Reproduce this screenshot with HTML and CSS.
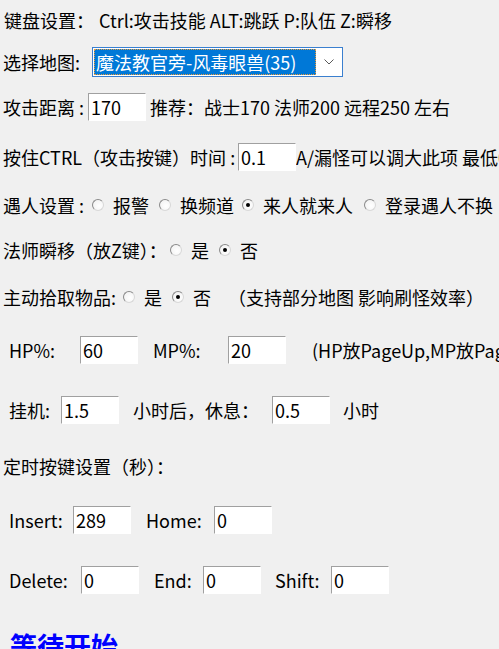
FILE: index.html
```html
<!DOCTYPE html>
<html lang="zh-CN">
<head>
<meta charset="utf-8">
<title>设置</title>
<link rel="stylesheet" href="styles.css">
</head>
<body>
<div class="window">
  <div class="row r1 pl4">
    <span class="lbl w-keys">键盘设置：</span><span>Ctrl:攻击技能 ALT:跳跃 P:队伍 Z:瞬移</span>
  </div>

  <div class="row r2 pl3">
    <span class="lbl w-map">选择地图:</span>
    <div class="combo">
      <span class="combo-value">魔法教官旁-风毒眼兽(35)</span>
      <span class="combo-arrow">
        <svg width="10" height="6" viewBox="0 0 10 6"><path d="M0.5 0.5 L5 5 L9.5 0.5" fill="none" stroke="#5a5a5a" stroke-width="1"/></svg>
      </span>
    </div>
  </div>

  <div class="row r3 pl3">
    <span class="lbl w-dist">攻击距离 :</span>
    <input class="field" type="text" value="170">
    <span class="after-dist">推荐：战士170 法师200 远程250 左右</span>
  </div>

  <div class="row r4 pl3">
    <span class="lbl w-ctrl">按住CTRL（攻击按键）时间 :</span>
    <input class="field field-top" type="text" value="0.1">
    <span class="under-note">卡A/漏怪可以调大此项 最低0.1</span>
  </div>

  <div class="row r5 pl3">
    <span class="lbl w-meet">遇人设置 :</span>
    <span class="opt o-alarm"><span class="radio"></span>报警</span>
    <span class="opt o-chan"><span class="radio"></span>换频道</span>
    <span class="opt o-come"><span class="radio on"></span>来人就来人</span>
    <span class="opt"><span class="radio"></span>登录遇人不换</span>
  </div>

  <div class="row r6 pl3">
    <span class="lbl w-mage">法师瞬移（放Z键）：</span>
    <span class="opt o-yes"><span class="radio"></span>是</span>
    <span class="opt"><span class="radio on"></span>否</span>
  </div>

  <div class="row r7 pl3">
    <span class="lbl w-pick">主动拾取物品:</span>
    <span class="opt o-yes"><span class="radio"></span>是</span>
    <span class="opt o-no"><span class="radio on"></span>否</span>
    <span>（支持部分地图 影响刷怪效率）</span>
  </div>

  <div class="row r8 pl9">
    <span class="lbl w-hp">HP%:</span>
    <input class="field" type="text" value="60">
    <span class="lbl w-mp ml15">MP%:</span>
    <input class="field" type="text" value="20">
    <span class="ml26">(HP放PageUp,MP放PageDown)</span>
  </div>

  <div class="row r9 pl9">
    <span class="lbl w-hang">挂机:</span>
    <input class="field" type="text" value="1.5">
    <span class="lbl w-rest ml14">小时后，休息：</span>
    <input class="field" type="text" value="0.5">
    <span class="ml13">小时</span>
  </div>

  <div class="row r10 pl3">
    <span>定时按键设置（秒）：</span>
  </div>

  <div class="row r11 pl9">
    <span class="lbl w-ins">Insert:</span>
    <input class="field" type="text" value="289">
    <span class="lbl w-home ml15">Home:</span>
    <input class="field" type="text" value="0">
  </div>

  <div class="row r12 pl9">
    <span class="lbl w-del">Delete:</span>
    <input class="field" type="text" value="0">
    <span class="lbl w-end ml15">End:</span>
    <input class="field" type="text" value="0">
    <span class="lbl w-shift ml14">Shift:</span>
    <input class="field" type="text" value="0">
  </div>

  <div class="row r13 pl10">
    <span class="status">等待开始</span>
  </div>
</div>
</body>
</html>
```

FILE: styles.css
```css
html, body {
  margin: 0;
  padding: 0;
}
body {
  width: 499px;
  height: 649px;
  overflow: hidden;
  background: #f0f0f0;
  color: #000;
  font-family: "Noto Sans CJK SC", "Microsoft YaHei", sans-serif;
  font-size: 18px;
}
.window {
  display: flex;
  flex-direction: column;
  padding-top: 6px;
}
.row {
  display: flex;
  align-items: center;
  height: 28px;
  line-height: 28px;
  white-space: nowrap;
  flex: none;
}
.pl3 { padding-left: 3px; }
.pl4 { padding-left: 4px; }
.pl9 { padding-left: 9px; }
.pl10 { padding-left: 10px; }
.ml13 { margin-left: 13px; }
.ml14 { margin-left: 14px; }
.ml15 { margin-left: 15px; }
.ml26 { margin-left: 26px; }

.r2 { margin-top: 13px; height: 30px; }
.r3 { margin-top: 16px; }
.r4 { margin-top: 22px; }
.r5 { margin-top: 20px; }
.r6 { margin-top: 17px; }
.r7 { margin-top: 19px; }
.r8 { margin-top: 25px; }
.r9 { margin-top: 32px; }
.r10 { margin-top: 28px; }
.r11 { margin-top: 26px; }
.r12 { margin-top: 32px; }
.r13 { margin-top: 38px; }

.lbl { flex: none; overflow: visible; }
.w-keys { width: 95px; }
.w-map { width: 89px; }
.w-dist { width: 85px; }
.w-ctrl { width: 235px; }
.w-meet { width: 89px; }
.w-mage { width: 167px; }
.w-pick { width: 120px; }
.w-hp { width: 71px; }
.w-mp { width: 75px; }
.w-hang { width: 52px; }
.w-rest { width: 139px; }
.w-ins { width: 64px; }
.w-home { width: 68px; }
.w-del { width: 72px; }
.w-end { width: 49px; }
.w-shift { width: 56px; }

.field {
  flex: none;
  box-sizing: border-box;
  width: 58px;
  height: 28px;
  margin: 0;
  padding: 0 0 0 2px;
  border-style: solid;
  border-width: 1px;
  border-color: #a0a0a0 #ffffff #ffffff #a0a0a0;
  background: #fff;
  font-family: "Noto Sans CJK SC", "Microsoft YaHei", sans-serif;
  font-size: 18px;
  color: #000;
  outline: none;
}
.field-top {
  position: relative;
  z-index: 1;
}
.after-dist { margin-left: 4px; }
.under-note {
  margin-left: -18px;
  position: relative;
  z-index: 0;
}

.combo {
  flex: none;
  box-sizing: border-box;
  width: 251px;
  height: 30px;
  border: 1px solid #3a7fcf;
  background: #fff;
  display: flex;
  align-items: center;
  padding: 1px;
}
.combo-value {
  box-sizing: border-box;
  width: 222px;
  height: 26px;
  line-height: 24px;
  background: #0078d7;
  color: #fff;
  border: 1px dotted #e89a3c;
  padding-left: 1px;
  font-size: 18px;
  overflow: hidden;
}
.combo-arrow {
  flex: 1;
  display: flex;
  justify-content: center;
  align-items: center;
}
.combo-arrow svg { display: block; }

.opt {
  flex: none;
  display: flex;
  align-items: center;
}
.o-alarm { width: 67px; }
.o-chan { width: 83px; }
.o-come { width: 122px; }
.o-yes { width: 49px; }
.o-no { width: 56px; }

.radio {
  flex: none;
  box-sizing: border-box;
  width: 12px;
  height: 12px;
  margin-right: 9px;
  border-radius: 50%;
  border: 1px solid;
  border-color: #8a8a8a #d8d8d8 #d8d8d8 #8a8a8a;
  background: radial-gradient(circle at 60% 60%, #ffffff 0%, #f4f4f4 70%, #e4e4e4 100%);
  display: flex;
  align-items: center;
  justify-content: center;
}
.radio.on::after {
  content: "";
  width: 4px;
  height: 4px;
  border-radius: 50%;
  background: #000;
}

.status {
  color: #0000ff;
  font-size: 27px;
  font-weight: bold;
  line-height: 28px;
}
```
